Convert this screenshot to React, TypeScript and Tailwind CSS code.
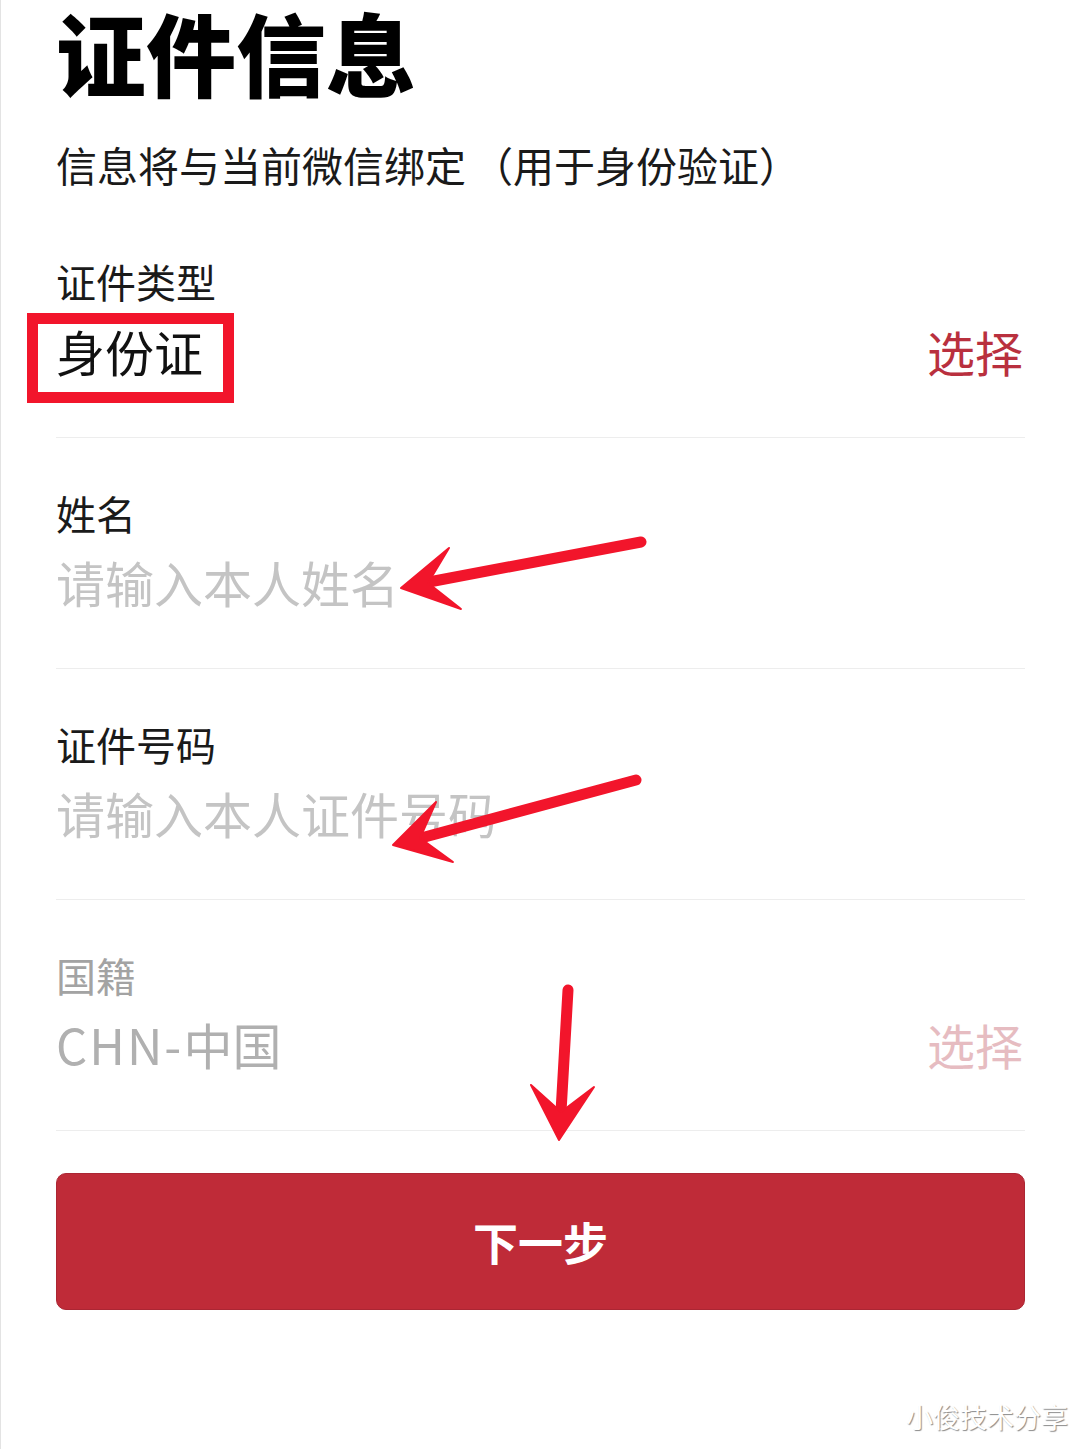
import React from 'react'

const font = { fontFamily: '"Noto Sans CJK SC", "Noto Sans", sans-serif' }

type FieldProps = {
  label: string
  value: React.ReactNode
  valueClass: string
  labelClass?: string
  action?: string
  actionClass?: string
}

const Field = ({ label, value, valueClass, labelClass = 'text-[#1a1a1a]', action, actionClass }: FieldProps) => (
  <div className="border-t border-[#ededed] pt-[55px] pb-[62px]">
    <div className={`text-[40px] leading-[40px] ${labelClass}`}>{label}</div>
    <div className="mt-[25px] flex items-center justify-between">
      <span className={`text-[49px] leading-[48px] ${valueClass}`}>{value}</span>
      {action && <span className={`text-[48px] leading-[48px] ${actionClass}`}>{action}</span>}
    </div>
  </div>
)

const Arrows = () => (
  <svg className="pointer-events-none absolute inset-0" width="1080" height="1449" viewBox="0 0 1080 1449">
    <g fill="#f2152b" stroke="#f2152b" strokeLinecap="round" strokeLinejoin="round">
      <line x1="640" y1="542" x2="428" y2="582" strokeWidth="11" />
      <polygon points="400,588 448,548 427,583 460,609" strokeWidth="2" />

      <line x1="635" y1="780" x2="420" y2="838" strokeWidth="11" />
      <polygon points="392,845 435,802 419,838 452,862" strokeWidth="2" />

      <line x1="567" y1="990" x2="560" y2="1112" strokeWidth="11" />
      <polygon points="558,1140 530,1085 560,1112 593,1087" strokeWidth="2" />
    </g>
  </svg>
)

export default function App() {
  return (
    <div style={font} className="relative min-h-[1449px] w-[1080px] overflow-hidden bg-white border-l border-[#e3e3e3]">
      <div className="px-[55px] pt-[1px]">
        <h1 className="text-[90px] leading-[100px] font-black text-black whitespace-nowrap">证件信息</h1>
        <p className="mt-[43px] text-[41px] leading-[40px] text-[#1a1a1a] whitespace-nowrap">
          信息将与当前微信绑定<span className="pl-[6px]">（</span>用于身份验证）
        </p>

        <div className="pt-[77px] pb-[62px]">
          <div className="text-[40px] leading-[40px] text-[#1a1a1a]">证件类型</div>
          <div className="mt-[26px] flex items-center justify-between">
            <span className="relative text-[49px] leading-[48px] text-[#111]">
              身份证
              <span className="absolute left-[-29px] top-[-14px] h-[90px] w-[207px] border-[11px] border-[#f2152b]" />
            </span>
            <span className="text-[48px] leading-[48px] text-[#b9303e] pr-[2px]">选择</span>
          </div>
        </div>

        <Field label="姓名" value="请输入本人姓名" valueClass="text-[#c4c4c4]" />
        <Field label="证件号码" value="请输入本人证件号码" valueClass="text-[#c4c4c4]" />
        <Field
          label="国籍"
          value={
            <>
              <span className="tracking-[2px]">CHN-</span>中国
            </>
          }
          labelClass="text-[#a3a3a3]"
          valueClass="text-[#b0b0b0]"
          action="选择"
          actionClass="text-[#e6bcc1] pr-[2px]"
        />

        <div className="border-t border-[#ededed] pt-[42px]">
          <button className="flex h-[137px] w-full items-center justify-center rounded-[10px] border border-[#ab2633] bg-[#bf2b38] text-[45px] font-bold text-white">
            下一步
          </button>
        </div>
      </div>

      <Arrows />

      <div className="absolute right-[12px] top-[1400px] text-[27px] leading-[34px] text-white [text-shadow:1px_1px_1px_#8a8a8a]">
        小俊技术分享
      </div>
    </div>
  )
}
